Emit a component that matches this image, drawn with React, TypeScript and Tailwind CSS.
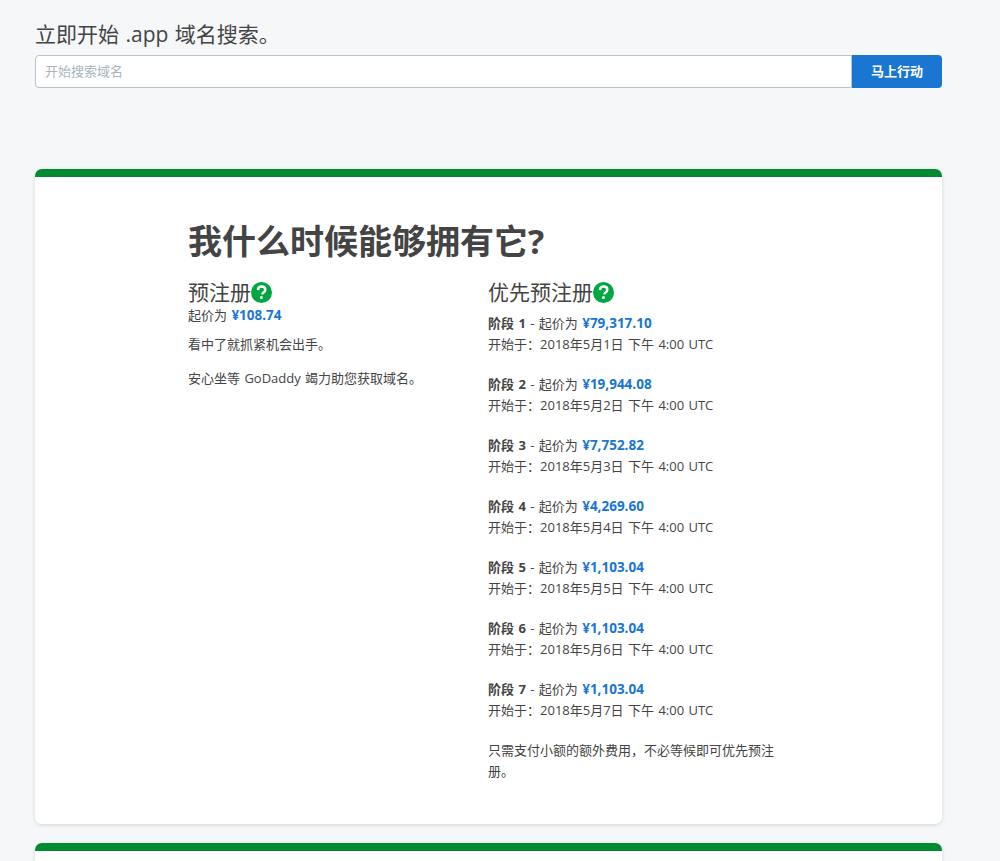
import React from 'react';

const FONT = "font-['Open_Sans','Noto_Sans_CJK_SC',sans-serif]";

const stages = [
  { n: 1, price: '¥79,317.10', date: '2018年5月1日' },
  { n: 2, price: '¥19,944.08', date: '2018年5月2日' },
  { n: 3, price: '¥7,752.82', date: '2018年5月3日' },
  { n: 4, price: '¥4,269.60', date: '2018年5月4日' },
  { n: 5, price: '¥1,103.04', date: '2018年5月5日' },
  { n: 6, price: '¥1,103.04', date: '2018年5月6日' },
  { n: 7, price: '¥1,103.04', date: '2018年5月7日' },
];

const HelpIcon = () => (
  <svg width="21" height="21" viewBox="0 0 21 21" className="shrink-0">
    <circle cx="10.5" cy="10.5" r="10.5" fill="#00a63f" />
    <path
      d="M6.9 8.1C7 5.9 8.5 4.6 10.6 4.6c2.2 0 3.7 1.3 3.7 3.1 0 1.4-.8 2.1-1.8 2.8-.9.6-1.1 1-1.1 2"
      fill="none"
      stroke="#fff"
      strokeWidth="2.5"
    />
    <circle cx="10.4" cy="15.6" r="1.5" fill="#fff" />
  </svg>
);

export default function App() {
  return (
    <div className={`${FONT} min-h-[861px] overflow-hidden bg-[#f5f7f8] px-[35px] pt-[20px] text-[13px] leading-[21px] text-[#444444] [word-spacing:1px]`}>
      <div className="h-[841px] w-[907px]">
        <h2 className="text-[21px] leading-[28px] font-normal">立即开始 .app 域名搜索。</h2>
        <div className="mt-[7px] flex h-[33px]">
          <input
            placeholder="开始搜索域名"
            className="min-w-0 flex-1 rounded-l-[4px] border border-[#b6c2cf] bg-white px-[9px] text-[13px] outline-none placeholder:text-[#a9b4bd]"
          />
          <button className="w-[90px] rounded-r-[4px] bg-[#1976d2] text-[13px] font-bold text-white">马上行动</button>
        </div>

        <section className="mt-[81px] h-[655px] rounded-[7px] border-t-[8px] border-[#008a32] bg-white shadow-[0_1px_4px_rgba(0,0,0,0.14)]">
          <div className="pl-[153px] pt-[41px]">
            <h1 className="text-[34px] leading-[46px] font-bold">我什么时候能够拥有它?</h1>
            <div className="mt-[15px] flex">
              <div className="w-[300px]">
                <h3 className="flex h-[26px] items-center text-[21px] font-normal">预注册<HelpIcon /></h3>
                <p>起价为 <b className="text-[13.5px] text-[#1976d2]">¥108.74</b></p>
                <p className="mt-[8px]">看中了就抓紧机会出手。</p>
                <p className="mt-[13px]">安心坐等 GoDaddy 竭力助您获取域名。</p>
              </div>
              <div className="w-[290px]">
                <h3 className="flex h-[26px] items-center text-[21px] font-normal">优先预注册<HelpIcon /></h3>
                <div className="mt-[8px] flex flex-col gap-[19px]">
                  {stages.map((s) => (
                    <div key={s.n}>
                      <p><b>阶段 {s.n}</b> - 起价为 <b className="text-[13.5px] text-[#1976d2]">{s.price}</b></p>
                      <p>开始于：{s.date} 下午 4:00 UTC</p>
                    </div>
                  ))}
                </div>
                <p className="mt-[19px]">只需支付小额的额外费用，不必等候即可优先预注册。</p>
              </div>
            </div>
          </div>
        </section>

        <section className="mt-[19px] h-[100px] rounded-[7px] border-t-[8px] border-[#008a32] bg-white shadow-[0_1px_4px_rgba(0,0,0,0.14)]" />
      </div>
    </div>
  );
}
